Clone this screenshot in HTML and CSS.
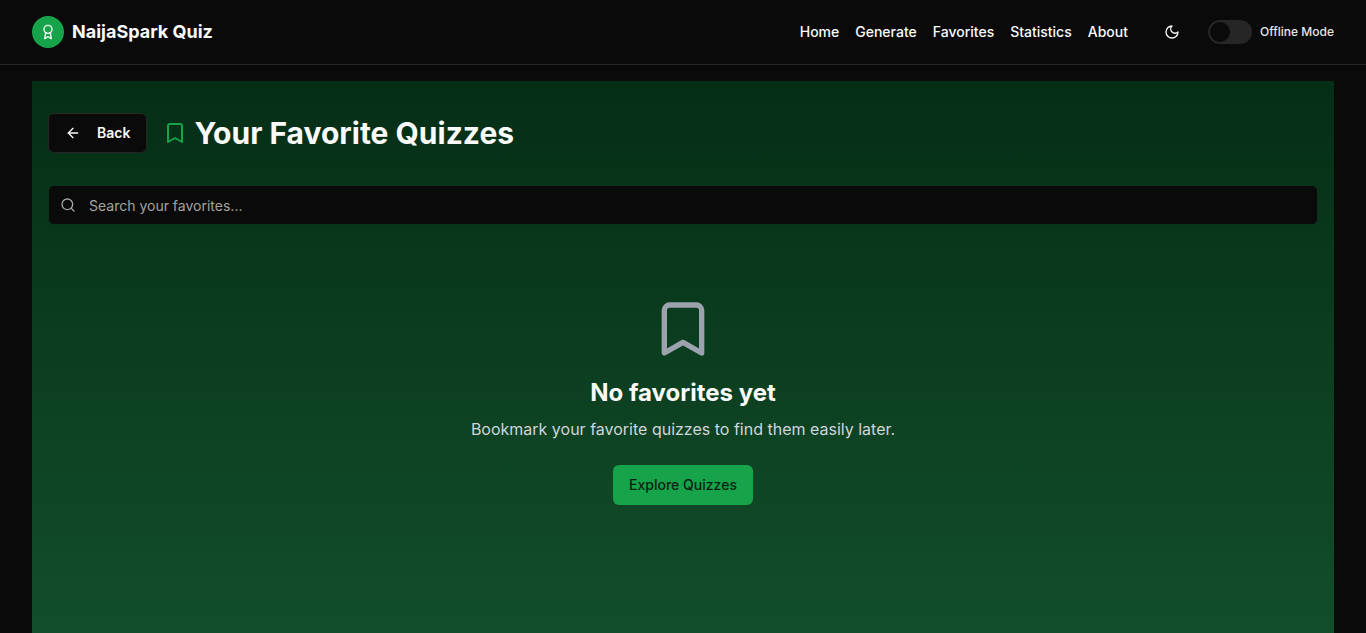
FILE: index.html
```html
<!DOCTYPE html>
<html lang="en">
<head>
    <meta charset="UTF-8">
    <title>NaijaSpark Quiz - Favorites</title>
    <link rel="stylesheet" href="styles.css">
</head>
<body>
    <!-- Top navigation -->
    <header class="header">
        <div class="brand">
            <span class="brand-icon">
                <svg viewBox="0 0 24 24" width="16" height="16" class="icon"><path d="m15.477 12.89 1.515 8.526a.5.5 0 0 1-.81.47l-3.58-2.687a1 1 0 0 0-1.197 0l-3.586 2.686a.5.5 0 0 1-.81-.469l1.514-8.526"/><circle cx="12" cy="8" r="6"/></svg>
            </span>
            <span class="brand-name">NaijaSpark Quiz</span>
        </div>
        <div class="header-right">
            <nav class="nav">
                <a href="#">Home</a>
                <a href="#">Generate</a>
                <a href="#">Favorites</a>
                <a href="#">Statistics</a>
                <a href="#">About</a>
            </nav>
            <button class="theme-btn">
                <svg viewBox="0 0 24 24" width="16" height="16" class="icon"><path d="M12 3a6 6 0 0 0 9 9 9 9 0 1 1-9-9Z"/></svg>
            </button>
            <div class="offline">
                <span class="switch"><span class="switch-thumb"></span></span>
                <span class="offline-label">Offline Mode</span>
            </div>
        </div>
    </header>

    <!-- Favorites page -->
    <main class="panel">
        <div class="title-row">
            <button class="back-btn">
                <svg viewBox="0 0 24 24" width="16" height="16" class="icon"><path d="m12 19-7-7 7-7"/><path d="M19 12H5"/></svg>
                <span class="back-label">Back</span>
            </button>
            <h1 class="title">
                <svg viewBox="0 0 24 24" width="24" height="24" class="icon title-icon"><path d="m19 21-7-4-7 4V5a2 2 0 0 1 2-2h10a2 2 0 0 1 2 2v16z"/></svg>
                Your Favorite Quizzes
            </h1>
        </div>

        <div class="search">
            <svg viewBox="0 0 24 24" width="16" height="16" class="icon search-icon"><circle cx="11" cy="11" r="8"/><path d="m21 21-4.3-4.3"/></svg>
            <input class="search-input" type="text" placeholder="Search your favorites...">
        </div>

        <section class="empty">
            <svg viewBox="0 0 24 24" width="64" height="64" class="icon empty-icon"><path d="m19 21-7-4-7 4V5a2 2 0 0 1 2-2h10a2 2 0 0 1 2 2v16z"/></svg>
            <h2 class="empty-title">No favorites yet</h2>
            <p class="empty-text">Bookmark your favorite quizzes to find them easily later.</p>
            <button class="explore-btn"><span class="explore-label">Explore Quizzes</span></button>
        </section>
    </main>
</body>
</html>
```

FILE: styles.css
```css
/* Basic page styling */
html, body {
    height: 100%;
}

body {
    margin: 0;
    overflow: hidden;
    display: flex;
    flex-direction: column;
    background-color: #0a0a0a;
    color: #fafafa;
    font-family: Inter, "Liberation Sans", sans-serif;
}

.icon {
    display: block;
    flex-shrink: 0;
    fill: none;
    stroke: currentColor;
    stroke-width: 2;
    stroke-linecap: round;
    stroke-linejoin: round;
}

/* Header */
.header {
    flex-shrink: 0;
    height: 64px;
    padding: 0 32px;
    display: flex;
    align-items: center;
    justify-content: space-between;
    border-bottom: 1px solid #262626;
}

.brand {
    display: flex;
    align-items: center;
    gap: 8px;
}

.brand-icon {
    width: 32px;
    height: 32px;
    border-radius: 50%;
    background-color: #16a34a;
    display: flex;
    align-items: center;
    justify-content: center;
}

.brand-name {
    padding-bottom: 1px;
    font-size: 18px;
    font-weight: 700;
}

.header-right {
    display: flex;
    align-items: center;
}

.nav {
    display: flex;
    gap: 16px;
    padding-bottom: 1px;
}

.nav a {
    color: #fafafa;
    text-decoration: none;
    font-size: 14px;
    font-weight: 500;
}

.theme-btn {
    width: 40px;
    height: 40px;
    margin-left: 24px;
    padding: 0;
    border: none;
    background: none;
    color: #fafafa;
    display: flex;
    align-items: center;
    justify-content: center;
}

.offline {
    margin-left: 16px;
    display: flex;
    align-items: center;
    gap: 8px;
}

.switch {
    width: 44px;
    height: 24px;
    box-sizing: border-box;
    border: 2px solid transparent;
    border-radius: 12px;
    background-color: #262626;
}

.switch-thumb {
    display: block;
    width: 20px;
    height: 20px;
    border-radius: 50%;
    background-color: #0a0a0a;
}

.offline-label {
    padding-bottom: 1px;
    font-size: 12px;
    font-weight: 500;
    color: #e5e5e5;
}

.panel {
    flex: 1;
    min-height: 0;
    margin: 16px 32px 0;
    padding: 32px 16px 0;
    background: linear-gradient(to bottom, #052e16, #14532d) no-repeat;
    background-size: 100% 638px;
}

.title-row {
    display: flex;
    align-items: center;
    gap: 16px;
    margin-bottom: 32px;
}

.back-btn {
    height: 40px;
    padding: 0 16px;
    display: flex;
    align-items: center;
    gap: 16px;
    border: 1px solid #262626;
    border-radius: 6px;
    background-color: #0a0a0a;
    color: #fafafa;
    font-family: inherit;
    font-size: 14px;
    font-weight: 600;
}

.back-label {
    padding-bottom: 1px;
}

.title {
    margin: 0;
    display: flex;
    align-items: center;
    gap: 7px;
    font-size: 30px;
    font-weight: 700;
    line-height: 36px;
}

.title-icon {
    color: #16a34a;
}

.search {
    height: 40px;
    box-sizing: border-box;
    padding: 0 11px;
    display: flex;
    align-items: center;
    gap: 13px;
    border: 1px solid #0a3219;
    border-radius: 6px;
    background-color: #0a0a0a;
}

.search-icon {
    color: #a3a3a3;
}

.search-input {
    flex: 1;
    border: none;
    outline: none;
    padding: 0;
    background: none;
    color: #fafafa;
    font-family: inherit;
    font-size: 14px;
}

.search-input::placeholder {
    color: #a3a3a3;
    opacity: 1;
}

/* Empty state */
.empty {
    padding-top: 72px;
    display: flex;
    flex-direction: column;
    align-items: center;
}

.empty-icon {
    color: #9ca3af;
}

.empty-title {
    margin: 16px 0 0;
    font-size: 24px;
    font-weight: 700;
    line-height: 32px;
}

.empty-text {
    margin: 8px 0 0;
    font-size: 16px;
    line-height: 24px;
    color: #d1d5db;
}

.explore-btn {
    margin-top: 24px;
    width: 140px;
    height: 40px;
    padding: 0 0 2px;
    border: none;
    border-radius: 6px;
    background-color: #16a34a;
    color: #0c1f14;
    font-family: inherit;
    font-size: 14px;
    font-weight: 500;
}
```
